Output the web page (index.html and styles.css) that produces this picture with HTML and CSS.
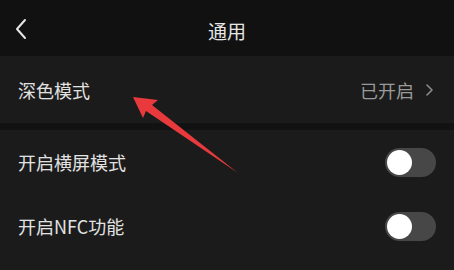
FILE: index.html
```html
<!DOCTYPE html>
<html lang="zh">
<head>
<meta charset="utf-8">
<link rel="stylesheet" href="styles.css">
</head>
<body>
<div class="page">
  <header class="header">
    <svg class="back" width="14" height="22" viewBox="0 0 14 22"><path d="M11 2 L3 11 L11 20" fill="none" stroke="#e6e6e6" stroke-width="2" stroke-linecap="round" stroke-linejoin="round"/></svg>
    <div class="title">通用</div>
  </header>
  <div class="row row-first">
    <span class="label">深色模式</span>
    <span class="value">已开启<svg class="chev" width="10" height="14" viewBox="0 0 10 14"><path d="M3 2 L8 7 L3 12" fill="none" stroke="#8a8a8a" stroke-width="1.6" stroke-linecap="round" stroke-linejoin="round"/></svg></span>
  </div>
  <div class="sep"></div>
  <div class="row">
    <span class="label">开启横屏模式</span>
    <span class="toggle"><span class="knob"></span></span>
  </div>
  <div class="row">
    <span class="label">开启NFC功能</span>
    <span class="toggle"><span class="knob"></span></span>
  </div>
  <svg class="arrow" width="454" height="270" viewBox="0 0 454 270"><polygon points="133,97 158,100 152,105 238,173 146,111 143,118" fill="#e83a3c"/></svg>
</div>
</body>
</html>
```
FILE: styles.css
```css
html, body {
  margin: 0;
  padding: 0;
  background: #1b1b1b;
}
.page {
  position: relative;
  width: 454px;
  height: 270px;
  overflow: hidden;
  font-family: "Noto Sans CJK SC", "Noto Sans", sans-serif;
  color: #e2e2e2;
  background: #1b1b1b;
}
.header {
  position: relative;
  height: 56px;
  background: #111111;
  display: flex;
  align-items: center;
  justify-content: center;
}
.back {
  position: absolute;
  left: 14px;
  top: 18px;
}
.title {
  font-size: 19px;
  margin-top: 4px;
  color: #e6e6e6;
}
.row {
  height: 64px;
  display: flex;
  align-items: center;
  justify-content: space-between;
  padding: 0 18px;
  background: #1b1b1b;
}
.row-first {
  height: 67px;
}
.label {
  font-size: 18px;
  color: #e2e2e2;
}
.value {
  display: flex;
  align-items: center;
  gap: 10px;
  font-size: 18px;
  color: #9a9a9a;
  margin-right: 2px;
}
.sep {
  height: 7px;
  background: #121212;
}
.toggle {
  width: 51px;
  height: 29px;
  border-radius: 15px;
  background: #474747;
  display: flex;
  align-items: center;
  padding-left: 2px;
  box-sizing: border-box;
}
.knob {
  width: 25px;
  height: 25px;
  border-radius: 50%;
  background: #ffffff;
}
.arrow {
  position: absolute;
  left: 0;
  top: 0;
}
```
